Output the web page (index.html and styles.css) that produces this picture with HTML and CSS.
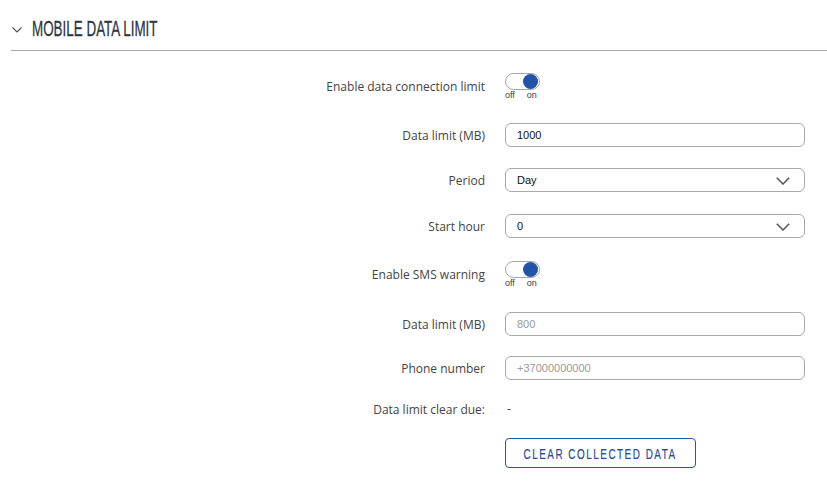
FILE: index.html
```html
<!DOCTYPE html>
<html>
<head>
<meta charset="utf-8">
<link rel="stylesheet" href="styles.css">
</head>
<body>
<section class="section">
  <div class="section-head">
    <svg class="chev" width="10" height="6" viewBox="0 0 10 6"><path d="M0.5 0.5 L5 5 L9.5 0.5" fill="none" stroke="#555" stroke-width="1.2"/></svg>
    <h2 class="title"><span>MOBILE DATA LIMIT</span></h2>
  </div>
  <div class="form">
    <div class="row r1">
      <label class="label">Enable data connection limit</label>
      <div class="switch-wrap">
        <div class="switch"><span class="knob"></span></div>
        <div class="switch-text"><span>off</span><span>on</span></div>
      </div>
    </div>
    <div class="row r2">
      <label class="label">Data limit (MB)</label>
      <div class="input">1000</div>
    </div>
    <div class="row r3">
      <label class="label">Period</label>
      <div class="input select">Day<svg class="arrow" width="14" height="8" viewBox="0 0 14 8"><path d="M0.8 0.8 L7 7 L13.2 0.8" fill="none" stroke="#555" stroke-width="1.5"/></svg></div>
    </div>
    <div class="row r4">
      <label class="label">Start hour</label>
      <div class="input select">0<svg class="arrow" width="14" height="8" viewBox="0 0 14 8"><path d="M0.8 0.8 L7 7 L13.2 0.8" fill="none" stroke="#555" stroke-width="1.5"/></svg></div>
    </div>
    <div class="row r5">
      <label class="label">Enable SMS warning</label>
      <div class="switch-wrap">
        <div class="switch"><span class="knob"></span></div>
        <div class="switch-text"><span>off</span><span>on</span></div>
      </div>
    </div>
    <div class="row r6">
      <label class="label">Data limit (MB)</label>
      <div class="input placeholder">800</div>
    </div>
    <div class="row r7">
      <label class="label">Phone number</label>
      <div class="input placeholder">+37000000000</div>
    </div>
    <div class="row r8">
      <label class="label">Data limit clear due:</label>
      <div class="value">-</div>
    </div>
    <div class="row r9">
      <div></div>
      <div><button class="btn"><span>CLEAR COLLECTED DATA</span></button></div>
    </div>
  </div>
</section>
</body>
</html>
```
FILE: styles.css
```css
html, body {
  margin: 0;
  padding: 0;
  background: #fff;
}
body {
  font-family: "Open Sans", "DejaVu Sans", sans-serif;
  color: #404040;
}
.section {
  padding-left: 11px;
}
.section-head {
  display: flex;
  align-items: center;
  height: 51px;
  border-bottom: 1px solid #a8a8a8;
  box-sizing: border-box;
  padding-top: 17px;
  padding-bottom: 9px;
}
.chev {
  margin-left: 1px;
  margin-right: 10px;
  margin-top: 2px;
  flex: none;
}
.title {
  margin: 0;
  font-family: "Liberation Sans", Arial, sans-serif;
  font-weight: normal;
  font-size: 22px;
  color: #2f3642;
  line-height: 24px;
  white-space: nowrap;
}
.title span {
  display: inline-block;
  transform: scaleX(0.61);
  transform-origin: left center;
  -webkit-text-stroke: 0.3px #2f3642;
}
.form {
  display: flex;
  flex-direction: column;
  padding-top: 21px;
}
.row {
  display: grid;
  grid-template-columns: 474px 300px;
  column-gap: 20px;
  align-items: center;
}
.r2 { margin-top: 22px; }
.r3 { margin-top: 21px; }
.r4 { margin-top: 22px; }
.r5 { margin-top: 22px; }
.r6 { margin-top: 23px; }
.r7 { margin-top: 20px; }
.r8 { margin-top: 17px; }
.r9 { margin-top: 17px; }
.label {
  text-align: right;
  font-size: 12px;
  color: #444;
}
.switch-wrap {
  display: flex;
  flex-direction: column;
  align-items: flex-start;
  padding-top: 1px;
}
.switch {
  width: 35px;
  height: 17px;
  box-sizing: border-box;
  border: 1px solid #a6a6a6;
  border-radius: 9px;
  background: #fff;
  position: relative;
}
.knob {
  position: absolute;
  right: 1px;
  top: 0px;
  width: 15px;
  height: 15px;
  border-radius: 50%;
  background: #2353a6;
}
.switch-text {
  display: flex;
  gap: 12px;
  font-family: "Liberation Sans", Arial, sans-serif;
  font-size: 9px;
  color: #444;
  line-height: 11px;
}
.input {
  height: 24px;
  box-sizing: border-box;
  border: 1px solid #a9a9a9;
  border-radius: 6px;
  padding-left: 11px;
  font-family: "Liberation Sans", Arial, sans-serif;
  font-size: 11px;
  color: #111;
  display: flex;
  align-items: center;
  position: relative;
}
.placeholder {
  color: #999;
}
.select .arrow {
  position: absolute;
  right: 14px;
  top: 8px;
}
.value {
  font-size: 12px;
  color: #444;
  padding-left: 2px;
  height: 24px;
  line-height: 24px;
}
.btn {
  width: 191px;
  height: 30px;
  background: #fff;
  border: 1px solid #2456a8;
  border-radius: 4px;
  padding: 0;
  font-family: "Liberation Sans", Arial, sans-serif;
  font-size: 15px;
  color: #2b4b92;
  cursor: pointer;
  display: flex;
  align-items: center;
  justify-content: center;
  overflow: visible;
}
.btn span {
  display: inline-block;
  white-space: nowrap;
  letter-spacing: 2.3px;
  transform: scaleX(0.66);
  flex: none;
  -webkit-text-stroke: 0.2px #2b4b92;
}
```
